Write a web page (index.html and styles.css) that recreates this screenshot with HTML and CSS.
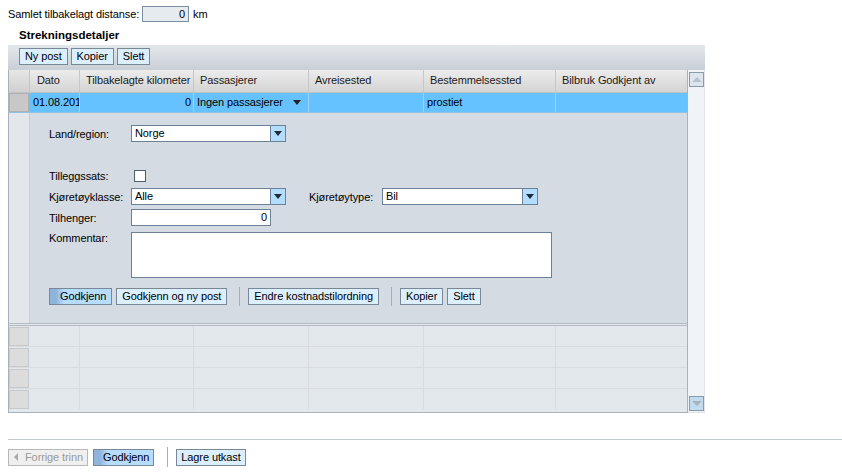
FILE: index.html
```html
<!DOCTYPE html>
<html>
<head>
<meta charset="utf-8">
<link rel="stylesheet" href="styles.css">
</head>
<body>
<div class="top">
  <span class="lbl">Samlet tilbakelagt distanse:</span>
  <span class="dist">0</span>
  <span>km</span>
</div>
<div class="title">Strekningsdetaljer</div>
<div class="panel">
  <div class="toolbar">
    <button class="btn">Ny post</button>
    <button class="btn">Kopier</button>
    <button class="btn">Slett</button>
  </div>
  <div class="gridwrap">
    <div class="grid">
      <div class="row head">
        <div class="c rh"></div>
        <div class="c">Dato</div>
        <div class="c">Tilbakelagte kilometer</div>
        <div class="c">Passasjerer</div>
        <div class="c">Avreisested</div>
        <div class="c">Bestemmelsessted</div>
        <div class="c">Bilbruk Godkjent av</div>
      </div>
      <div class="row sel">
        <div class="c rh"></div>
        <div class="c">01.08.201</div>
        <div class="c num">0</div>
        <div class="c dd">Ingen passasjerer<span class="tri"></span></div>
        <div class="c"></div>
        <div class="c">prostiet</div>
        <div class="c"></div>
      </div>
      <div class="detail">
        <div class="strip"></div>
        <div class="form">
          <div class="frow r1">
            <span class="fl">Land/region:</span>
            <div class="select w155"><span>Norge</span><span class="arrow"></span></div>
          </div>
          <div class="frow r2">
            <span class="fl">Tilleggssats:</span>
            <span class="chk"></span>
          </div>
          <div class="frow r3">
            <span class="fl">Kjøretøyklasse:</span>
            <div class="select w155"><span>Alle</span><span class="arrow"></span></div>
            <span class="fl2">Kjøretøytype:</span>
            <div class="select w156"><span>Bil</span><span class="arrow"></span></div>
          </div>
          <div class="frow r4">
            <span class="fl">Tilhenger:</span>
            <div class="input">0</div>
          </div>
          <div class="frow r5">
            <span class="fl">Kommentar:</span>
            <div class="textarea"></div>
          </div>
          <div class="actions">
            <button class="btn primary">Godkjenn</button>
            <button class="btn">Godkjenn og ny post</button>
            <span class="sep"></span>
            <button class="btn">Endre kostnadstilordning</button>
            <span class="sep"></span>
            <button class="btn">Kopier</button>
            <button class="btn">Slett</button>
          </div>
        </div>
      </div>
      <div class="row empty"><div class="c rh"></div><div class="c"></div><div class="c"></div><div class="c"></div><div class="c"></div><div class="c"></div><div class="c"></div></div>
      <div class="row empty"><div class="c rh"></div><div class="c"></div><div class="c"></div><div class="c"></div><div class="c"></div><div class="c"></div><div class="c"></div></div>
      <div class="row empty"><div class="c rh"></div><div class="c"></div><div class="c"></div><div class="c"></div><div class="c"></div><div class="c"></div><div class="c"></div></div>
      <div class="row empty last"><div class="c rh"></div><div class="c"></div><div class="c"></div><div class="c"></div><div class="c"></div><div class="c"></div><div class="c"></div></div>
    </div>
    <div class="scroll">
      <span class="sbtn up"></span>
      <span class="sbtn down"></span>
    </div>
  </div>
</div>
<div class="footer">
  <button class="btn disabled"><span class="ltri"></span>Forrige trinn</button>
  <button class="btn primary">Godkjenn</button>
  <span class="sep"></span>
  <button class="btn">Lagre utkast</button>
</div>
</body>
</html>
```
FILE: styles.css
```css
* { box-sizing: border-box; }
body {
  margin: 0;
  font-family: "Liberation Sans", Arial, sans-serif;
  font-size: 11px;
  letter-spacing: -0.1px;
  color: #000;
  background: #fff;
}
.top {
  display: flex;
  align-items: center;
  padding: 5px 8px 0 8px;
  height: 22px;
}
.top .lbl { margin-right: 3px; }
.dist {
  width: 47px;
  height: 16px;
  border: 1px solid #7b8fa3;
  background: #e6ebf0;
  text-align: right;
  padding-right: 3px;
  line-height: 14px;
  margin-right: 4px;
}
.title {
  font-weight: bold;
  font-size: 11.5px;
  letter-spacing: 0;
  margin: 6px 0 0 19px;
  height: 17px;
  line-height: 14px;
}
.panel {
  margin-left: 8px;
  width: 697px;
}
.toolbar {
  height: 25px;
  background: linear-gradient(#e4e8ec, #c9cfd6);
  display: flex;
  align-items: flex-start;
  gap: 3px;
  padding: 3px 0 0 11px;
}
.btn {
  font: inherit;
  letter-spacing: inherit;
  height: 17px;
  line-height: 15px;
  padding: 0 5px;
  border: 1px solid #7a8794;
  background: #dbefff;
  color: #000;
  margin: 0;
  border-radius: 0;
  display: inline-flex;
  align-items: center;
}
.btn.primary {
  background: linear-gradient(90deg, #8eb4dc 0, #8eb4dc 6px, #b6ddff 14px, #b6ddff 100%);
  padding: 0 5px 0 10px;
}
.btn.disabled {
  background: #efefef;
  color: #9a9a9a;
  border-color: #b8b8b8;
  padding-left: 5px;
}
.ltri {
  width: 0; height: 0;
  border-top: 4px solid transparent;
  border-bottom: 4px solid transparent;
  border-right: 4px solid #a8a8a8;
  margin-right: 7px;
}
.gridwrap {
  display: flex;
  height: 343px;
}
.grid {
  width: 680px;
  border-left: 1px solid #a9b1bc;
  border-bottom: 1px solid #a9b1bc;
  border-right: 1px solid #a9b1bc;
  background: #e3e8ec;
}
.row {
  display: grid;
  grid-template-columns: 21px 50px 114px 115px 115px 132px 131px;
}
.row .c {
  border-right: 1px solid #d9dcdf;
  white-space: nowrap;
  overflow: hidden;
  padding-left: 3px;
}
.row .c:last-child { border-right: 0; }
.head {
  height: 23px;
  background: linear-gradient(#ececec, #d4d4d4);
  border-bottom: 1px solid #c0c4c8;
}
.head .c {
  border-right: 1px solid #c6c6c6;
  padding-left: 6px;
  line-height: 21px;
  color: #1a1a1a;
}
.head .c:nth-child(2) { padding-left: 7px; }
.head .c.rh { background: linear-gradient(#e6e6e6, #d0d0d0); }
.sel {
  height: 20px;
  background: #66c2ff;
  border-bottom: 1px solid #8fc0e6;
}
.sel .c {
  line-height: 19px;
  border-right: 1px solid #9dd4fa;
}
.sel .c.rh {
  background: #c8c8c8;
  border: 1px solid #b0b0b0;
  margin-right: 1px;
}
.num { text-align: right; padding-right: 2px; }
.dd { display: flex; align-items: center; justify-content: space-between; padding-right: 7px; }
.tri {
  width: 0; height: 0;
  border-left: 4.5px solid transparent;
  border-right: 4.5px solid transparent;
  border-top: 5px solid #222;
}
.detail {
  display: flex;
  height: 213px;
  border-bottom: 3px double #b4bac2;
}
.strip {
  width: 21px;
  background: #e3e7eb;
  border-right: 1px solid #c8cdd3;
}
.form {
  flex: 1;
  background: #d5dbe2;
  padding: 12px 0 0 19px;
}
.frow {
  display: flex;
  align-items: center;
}
.fl { width: 82px; }
.fl2 { width: 73px; margin-left: 23px; }
.r1 { height: 17px; }
.r2 { height: 13px; margin-top: 27px; }
.r3 { height: 17px; margin-top: 6px; }
.r4 { height: 17px; margin-top: 4px; }
.r5 { align-items: flex-start; margin-top: 6px; }
.r5 .fl { line-height: 12px; }
.select {
  display: flex;
  height: 17px;
  border: 1px solid #6b8197;
  background: #fff;
}
.select span:first-child { flex: 1; padding-left: 3px; line-height: 15px; }
.w155 { width: 155px; }
.w156 { width: 156px; }
.arrow {
  width: 15px;
  border-left: 1px solid #6b8197;
  background: #b3ddff;
  display: flex;
  align-items: center;
  justify-content: center;
}
.arrow::after {
  content: "";
  width: 0; height: 0;
  border-left: 4.5px solid transparent;
  border-right: 4.5px solid transparent;
  border-top: 5px solid #1e2b38;
}
.chk {
  margin-left: 3px;
  width: 12px;
  height: 12px;
  border: 1px solid #4d5e70;
  background: #fff;
}
.input {
  width: 140px;
  height: 17px;
  border: 1px solid #6b8197;
  background: #fff;
  text-align: right;
  padding-right: 3px;
  line-height: 15px;
}
.textarea {
  width: 421px;
  height: 46px;
  border: 1px solid #6b8197;
  background: #fff;
}
.actions {
  display: flex;
  align-items: center;
  margin-top: 9px;
  gap: 4px;
}
.actions .sep {
  width: 1px;
  height: 19px;
  background: #a2b0be;
  margin: 0 4px 0 8px;
}
.empty { height: 21px; border-bottom: 1px solid #d9dcdf; }
.empty.last { border-bottom: 0; height: 20px; }
.empty .c.rh {
  background: #dcdcdc;
  border: 1px solid #c8c8c8;
  margin: 1px 1px 0 0;
}
.scroll {
  width: 17px;
  background: #f0f4f8;
  border-right: 1px solid #e0e4e8;
  border-bottom: 1px solid #e0e4e8;
  display: flex;
  flex-direction: column;
  justify-content: space-between;
  padding: 2px 1px 1px 1px;
}
.sbtn {
  width: 15px;
  height: 15px;
  border: 1px solid #8a9aaa;
  background: #dde6ee;
  display: flex;
  align-items: center;
  justify-content: center;
}
.sbtn.down { background: #c3dbef; }
.sbtn.up::after {
  content: "";
  border-left: 5px solid transparent;
  border-right: 5px solid transparent;
  border-bottom: 5px solid #b8c2cc;
}
.sbtn.down::after {
  content: "";
  border-left: 5px solid transparent;
  border-right: 5px solid transparent;
  border-top: 5px solid #a8b2bc;
}
.footer {
  margin: 26px 0 0 8px;
  border-top: 1px solid #c3c8ce;
  padding-top: 7px;
  display: flex;
  align-items: center;
  gap: 5px;
}
.footer .btn { padding: 0 4px; }
.footer .btn.primary { padding: 0 4px 0 9px; }
.footer .btn.disabled { padding-left: 5px; }
.footer .sep {
  width: 1px;
  height: 20px;
  background: #a2b0be;
  margin: 0 3px 0 8px;
}
```
